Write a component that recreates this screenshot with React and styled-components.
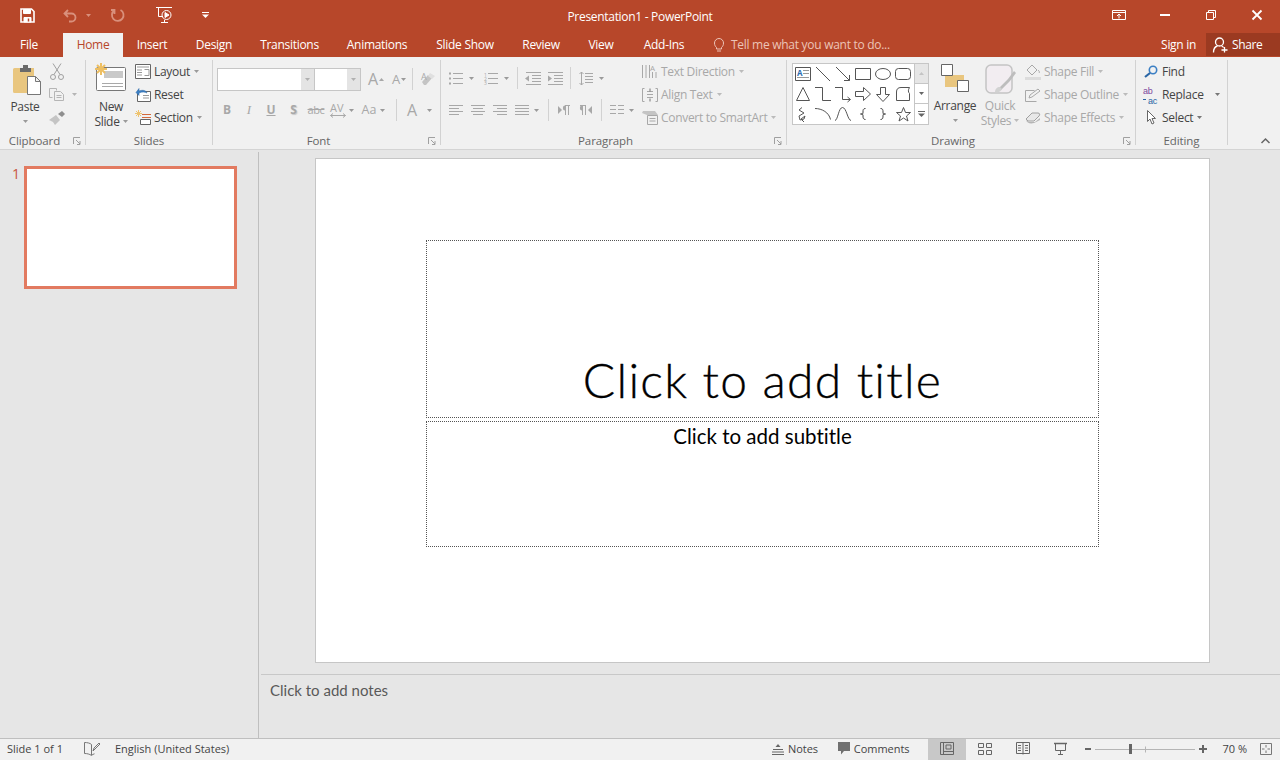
import React from "react";
import styled, { createGlobalStyle } from "styled-components";

const GlobalStyle = createGlobalStyle`
  html, body { margin: 0; padding: 0; height: 100%; overflow: hidden; }
  body { font-family: "Open Sans", "Liberation Sans", sans-serif; font-size: 12px; color: #444; background: #e6e6e6; }
  * { box-sizing: border-box; }
`;

const BRICK = "#b7472a";
const OFF = "#a8a8a8";

const Page = styled.div`
  width: 1280px;
  height: 760px;
  display: flex;
  flex-direction: column;
`;

/* title bar */
const TitleBar = styled.div`
  height: 33px;
  background: ${BRICK};
  display: grid;
  grid-template-columns: 1fr auto 1fr;
  align-items: center;
  color: #fff;
`;
const Qat = styled.div`
  display: flex;
  align-items: center;
  padding-bottom: 3px;
`;
const WinTitle = styled.div`
  font-size: 12px;
  letter-spacing: -0.3px;
`;
const WinButtons = styled.div`
  display: flex;
  justify-content: flex-end;
  padding-bottom: 3px;
`;
const WinBtn = styled.div`
  width: 46px;
  height: 30px;
  display: flex;
  align-items: center;
  justify-content: center;
`;

/* tabs */
const TabBar = styled.div`
  height: 24px;
  background: ${BRICK};
  display: flex;
  align-items: stretch;
  color: #fff;
`;
const Tab = styled.div`
  width: ${(p) => p.$w}px;
  margin-left: ${(p) => p.$ml || 0}px;
  display: flex;
  align-items: center;
  justify-content: center;
  letter-spacing: -0.3px;
  padding-bottom: 1px;
  background: ${(p) => (p.$active ? "#f1f1f1" : "transparent")};
  color: ${(p) => (p.$active ? BRICK : "#fff")};
`;
const TellMe = styled.div`
  display: flex;
  align-items: center;
  color: #ecc4b8;
  letter-spacing: -0.28px;
  padding: 0 0 1px 14px;
  gap: 7px;
  flex: 1;
`;
const SignIn = styled.div`
  display: flex;
  align-items: center;
  letter-spacing: -0.3px;
  padding: 0 10px 1px 0;
`;
const Share = styled.div`
  width: 74px;
  height: 23px;
  background: #9b3a21;
  display: flex;
  align-items: center;
  padding-left: 7px;
  gap: 4px;
  letter-spacing: -0.35px;
`;

/* ribbon */
const Ribbon = styled.div`
  height: 93px;
  background: #f1f1f1;
  border-bottom: 1px solid #d4d4d4;
  display: flex;
  padding-top: 3px;
`;
const Group = styled.div`
  width: ${(p) => p.$w}px;
  height: 85px;
  flex: none;
  border-right: 1px solid #d2d2d2;
  display: flex;
  flex-direction: column;
`;
const GroupBody = styled.div`
  height: 71px;
  display: flex;
`;
const GroupFoot = styled.div`
  height: 14px;
  display: flex;
  color: #666;
  font-size: 11.5px;
  line-height: 20px;
  letter-spacing: -0.1px;
`;
const GroupName = styled.div`
  flex: 1;
  text-align: center;
`;
const Launcher = styled.div`
  width: 16px;
  height: 20px;
  display: flex;
  align-items: center;
  justify-content: center;
`;
const Collapse = styled.div`
  flex: 1;
  height: 85px;
  display: flex;
  align-items: flex-end;
  justify-content: flex-end;
  padding: 0 10px 1px 0;
`;
const BigBtn = styled.div`
  width: ${(p) => p.$w}px;
  margin-left: ${(p) => p.$ml || 0}px;
  flex: none;
  display: flex;
  flex-direction: column;
  align-items: center;
  color: ${(p) => (p.$off ? OFF : "#444")};
  letter-spacing: -0.3px;
`;
const BigIcon = styled.div`
  height: ${(p) => p.$h || 39}px;
  display: flex;
  align-items: flex-end;
  padding-bottom: ${(p) => p.$pb}px;
`;
const BigLine = styled.div`
  height: 15px;
  line-height: 15px;
  display: flex;
  align-items: center;
  white-space: nowrap;
`;
const Stack = styled.div`
  margin-left: ${(p) => p.$ml || 0}px;
  display: flex;
  flex-direction: column;
  flex: none;
`;
const StackRow = styled.div`
  height: 23px;
  display: flex;
  align-items: center;
  color: ${(p) => (p.$off ? OFF : "#444")};
  letter-spacing: -0.3px;
  white-space: nowrap;
`;
const StackText = styled.span`
  margin-left: 3px;
`;
const ToolRows = styled.div`
  width: ${(p) => p.$w}px;
  flex: none;
  padding-top: ${(p) => p.$top}px;
  display: flex;
  flex-direction: column;
  gap: ${(p) => p.$gap}px;
`;
const ToolRow = styled.div`
  height: 30px;
  display: flex;
  align-items: center;
`;
const Sep = styled.i`
  display: block;
  flex: none;
  width: 1px;
  height: 22px;
  margin-left: ${(p) => p.$ml}px;
  background: #d2d2d2;
`;
const Combo = styled.div`
  margin-left: 4px;
  display: flex;
  height: 23px;
  border: 1px solid #c6c6c6;
  background: #c6c6c6;
`;
const ComboField = styled.div`
  width: ${(p) => p.$w}px;
  margin-left: ${(p) => p.$ml || 0}px;
  background: #fff;
`;
const ComboArrow = styled.div`
  width: 13px;
  background: #e4e4e4;
  display: flex;
  align-items: center;
  justify-content: center;
`;
const Glyph = styled.span`
  flex: none;
  width: ${(p) => p.$w}px;
  margin-left: ${(p) => p.$ml || 0}px;
  text-align: center;
  color: ${OFF};
  font-family: ${(p) => (p.$serif ? '"Liberation Serif", serif' : "inherit")};
  font-size: ${(p) => p.$size || 12}px;
  font-weight: ${(p) => (p.$bold ? 700 : 400)};
  font-style: ${(p) => (p.$italic ? "italic" : "normal")};
  text-decoration: ${(p) => p.$deco || "none"};
  text-shadow: ${(p) => (p.$shadow ? "1px 1px 1px #c8c8c8" : "none")};
  letter-spacing: ${(p) => p.$ls || 0}px;
  line-height: 14px;
`;
const Gallery = styled.div`
  margin: 3px 0 0 5px;
  width: 137px;
  height: 62px;
  border: 1px solid #c6c6c6;
  background: #fff;
  display: flex;
  flex: none;
`;
const ShapeGrid = styled.div`
  width: 121px;
  display: grid;
  grid-template-columns: repeat(6, 20px);
  grid-auto-rows: 20px;
  place-items: center;
`;
const GalleryScroll = styled.div`
  flex: 1;
  border-left: 1px solid #c6c6c6;
  display: grid;
  grid-template-rows: repeat(3, 1fr);
`;
const ScrollBtn = styled.div`
  display: flex;
  align-items: center;
  justify-content: center;
  background: ${(p) => (p.$off ? "#e6e6e6" : "#fff")};
  border-bottom: ${(p) => (p.$last ? "none" : "1px solid #c6c6c6")};
`;

/* workspace */
const Workspace = styled.div`
  height: 588px;
  display: flex;
  background: #e6e6e6;
`;
const Thumbs = styled.div`
  width: 259px;
  margin-top: 2px;
  border-right: 1px solid #bfbfbf;
  padding: 14px 0 0 12px;
  display: flex;
  align-items: flex-start;
`;
const ThumbNo = styled.div`
  width: 12px;
  color: #c8553d;
  font-size: 14px;
  line-height: 16px;
`;
const ThumbFrame = styled.div`
  width: 213px;
  height: 123px;
  background: #fff;
  border: 3px solid #e27a60;
`;
const Editor = styled.div`
  flex: 1;
  display: flex;
  flex-direction: column;
`;
const SlideArea = styled.div`
  height: 524px;
  padding: 8px 0 0 56px;
`;
const Slide = styled.div`
  width: 895px;
  height: 505px;
  background: #fff;
  border: 1px solid #c6c6c6;
  padding: 81px 0 0 110px;
  display: flex;
  flex-direction: column;
  gap: 3px;
`;
const TitleBox = styled.div`
  width: 673px;
  height: 178px;
  border: 1px dotted #555;
  display: flex;
  align-items: flex-end;
  justify-content: center;
  font-family: "Lato", sans-serif;
  font-weight: 300;
  font-size: 48px;
  letter-spacing: 1.25px;
  font-variant-ligatures: none;
  -webkit-text-stroke: 0.35px #000;
  line-height: 74px;
  color: #000;
`;
const SubBox = styled.div`
  width: 673px;
  height: 126px;
  border: 1px dotted #555;
  text-align: center;
  font-family: "Lato", sans-serif;
  font-size: 20.5px;
  font-variant-ligatures: none;
  line-height: 28px;
  color: #000;
`;
const Notes = styled.div`
  flex: 1;
  margin-left: 2px;
  border-top: 1px solid #c8c8c8;
  padding: 5px 0 0 9px;
  font-family: "Lato", sans-serif;
  font-size: 15px;
  line-height: 20px;
  color: #595959;
`;

/* status bar */
const StatusBar = styled.div`
  height: 22px;
  background: #f1f1f1;
  border-top: 1px solid #bfbfbf;
  display: flex;
  align-items: center;
  padding-bottom: 2px;
  font-size: 11px;
  color: #444;
`;
const StatusText = styled.span`
  margin-left: ${(p) => p.$ml}px;
  white-space: nowrap;
  letter-spacing: ${(p) => p.$ls || 0}px;
`;
const StatusGap = styled.div`
  flex: 1;
`;
const ViewBtn = styled.div`
  width: 38px;
  height: 21px;
  flex: none;
  margin: 2px 0 0 ${(p) => p.$ml}px;
  background: #c8c8c8;
  display: flex;
  align-items: center;
  justify-content: center;
  padding-bottom: 2px;
`;
const EndPad = styled.div`
  width: 8px;
  flex: none;
`;

const Svg = styled.svg`
  display: block;
  flex: none;
  overflow: visible;
  margin-left: ${(p) => p.$ml || 0}px;
  fill: none;
  stroke: ${(p) => p.$c};
`;
const Ico = ({ w, h, ml, c = OFF, children }) => (
  <Svg width={w} height={h} viewBox={`0 0 ${w} ${h}`} $ml={ml} $c={c}>
    {children}
  </Svg>
);
const Caret = ({ ml, c = "#9a9a9a" }) => (
  <Ico w={5} h={3} ml={ml} c="none">
    <path d="M0 0h5L2.5 3z" fill={c} />
  </Ico>
);
const LauncherIcon = () => (
  <Ico w={8} h={8} c="#a0a0a0">
    <path d="M.5 7V.5H7M3 3l4 4M7 4v3.5H4" />
  </Ico>
);
const lines = (rows) => rows.map(([x, y, l], i) => <path key={i} d={`M${x} ${y + 0.5}h${l}`} />);

const WHITE = "#fff";
const PALE = "#d9907c";

export default function App() {
  return (
    <Page>
      <GlobalStyle />
      <TitleBar>
        <Qat>
          <Ico w={15} h={15} ml={20} c={WHITE}>
            <path d="M1 1h10.5L14 3.5V14H1z" strokeWidth="1.6" />
            <path d="M3.5 1.5h7v4h-7z" fill={WHITE} />
            <path d="M4 9.5h7V14H4z" fill={WHITE} />
            <path d="M8.5 10.5v3" stroke={BRICK} strokeWidth="1.5" />
          </Ico>
          <Ico w={14} h={13} ml={28} c={PALE}>
            <path d="M5 1L1.5 4.5 5 8M2 4.5h6.5a4 4 0 0 1 0 8H6" strokeWidth="1.8" />
          </Ico>
          <Caret ml={9} c={PALE} />
          <Ico w={14} h={14} ml={20} c={PALE}>
            <path d="M9.5 2a5.8 5.8 0 1 1-6 .3M3.500 6V2H0" strokeWidth="1.8" />
          </Ico>
          <Ico w={17} h={16} ml={31} c={WHITE}>
            <path d="M0 .5h16M2.5 1v8.5H7M5 15.5h7M8.5 13v2" />
            <circle cx="10.5" cy="8" r="4.5" />
            <path d="M9 5.5l4 2.5-4 2.5z" fill={WHITE} />
          </Ico>
          <Ico w={7} h={6} ml={29} c={WHITE}>
            <path d="M0 .5h7" />
            <path d="M0 2.5h7L3.5 6z" fill={WHITE} stroke="none" />
          </Ico>
        </Qat>
        <WinTitle>Presentation1 - PowerPoint</WinTitle>
        <WinButtons>
          <WinBtn>
            <Ico w={14} h={10} c={WHITE}>
              <path d="M.5.5h13v9H.5zM.5 2.5h13M7 8.5V4.5M5 6l2-2 2 2" />
            </Ico>
          </WinBtn>
          <WinBtn>
            <Ico w={10} h={2} c={WHITE}>
              <path d="M0 1h10" strokeWidth="2" />
            </Ico>
          </WinBtn>
          <WinBtn>
            <Ico w={10} h={10} c={WHITE}>
              <path d="M.5 2.5h7v7h-7zM2.5 2.5v-2h7v7h-2" />
            </Ico>
          </WinBtn>
          <WinBtn>
            <Ico w={10} h={10} c={WHITE}>
              <path d="M.5.5l9 9M9.5.5l-9 9" strokeWidth="1.8" />
            </Ico>
          </WinBtn>
        </WinButtons>
      </TitleBar>

      <TabBar>
        <Tab $w={58}>File</Tab>
        <Tab $w={60} $ml={5} $active>Home</Tab>
        <Tab $w={58}>Insert</Tab>
        <Tab $w={66}>Design</Tab>
        <Tab $w={85}>Transitions</Tab>
        <Tab $w={90}>Animations</Tab>
        <Tab $w={86}>Slide Show</Tab>
        <Tab $w={66}>Review</Tab>
        <Tab $w={54}>View</Tab>
        <Tab $w={72}>Add-Ins</Tab>
        <TellMe>
          <Ico w={10} h={14} c="#ecc4b8">
            <path d="M2.5 9.5C1.5 8.5.5 7.5.5 5a4.5 4.5 0 0 1 9 0c0 2.5-1 3.5-2 4.5v1.500h-5zM3 13h4" />
          </Ico>
          Tell me what you want to do...
        </TellMe>
        <SignIn>Sign in</SignIn>
        <Share>
          <Ico w={15} h={16} c={WHITE}>
            <circle cx="6.500" cy="5" r="4" strokeWidth="1.300" />
            <path d="M.5 15.500c0-4 2-6 4-6.500M8.500 9c1 .3 1.500.6 2 1.500M11.500 10v5.500M8.500 13h6" strokeWidth="1.300" />
          </Ico>
          Share
        </Share>
      </TabBar>

      <Ribbon>
        <Group $w={86}>
          <GroupBody>
            <BigBtn $w={42} $ml={4}>
              <BigIcon $pb={4}>
                <Ico w={28} h={30} ml={4} c="#777">
                  <path d="M0 4.500a1.500 1.500 0 0 1 1.500-1.500h19.500v25H1.500A1.500 1.500 0 0 1 0 26.500z" fill="#e9c67f" stroke="none" />
                  <path d="M7 3h3V0h5v3h3v4H7z" fill="#6a6a6a" stroke="none" />
                  <path d="M14.500 11.500h8l5 5v13h-13zM22.500 11.500v5h5" fill="#fff" />
                </Ico>
              </BigIcon>
              <BigLine>Paste</BigLine>
              <BigLine><Caret /></BigLine>
            </BigBtn>
            <Stack $ml={3}>
              <StackRow>
                <Ico w={16} h={17} c="#a0a0a0">
                  <path d="M4 .5l7 11M12 .5l-7 11" />
                  <circle cx="4" cy="14" r="2.500" />
                  <circle cx="12" cy="14" r="2.500" />
                </Ico>
              </StackRow>
              <StackRow>
                <Ico w={16} h={13} c="#b5b5b5">
                  <path d="M.5.5h7l0 2M.5.5v9h3M5.500 3.500h6l3 3v6h-9zM7.500 7.500h5M7.500 9.500h5" />
                </Ico>
                <Caret ml={7} c="#b5b5b5" />
              </StackRow>
              <StackRow>
                <Ico w={16} h={14} c="none">
                  <path d="M0 9l7-5 4 5-5 5-2-3z" fill="#c4c4c4" />
                  <path d="M9 3l4-3 3 3-3 3z" fill="#8e8e8e" />
                </Ico>
              </StackRow>
            </Stack>
          </GroupBody>
          <GroupFoot>
            <GroupName>Clipboard</GroupName>
            <Launcher><LauncherIcon /></Launcher>
          </GroupFoot>
        </Group>

        <Group $w={127}>
          <GroupBody>
            <BigBtn $w={36} $ml={7}>
              <BigIcon $pb={8}>
                <Ico w={32} h={28} c="#777">
                  <path d="M2.500 4.500h27a1 1 0 0 1 1 1v21a1 1 0 0 1-1 1h-27a1 1 0 0 1-1-1v-21a1 1 0 0 1 1-1z" fill="#fff" />
                  <path d="M9 8h19v7H9z" fill="#c9c9c9" stroke="none" />
                  <path d="M7 20.500h21M7 23.500h21" stroke="#a9a9a9" />
                  <path d="M6 0v12M0 6h12M2 2l8 8M10 2l-8 8" stroke="#eebf62" strokeWidth="2" />
                </Ico>
              </BigIcon>
              <BigLine>New</BigLine>
              <BigLine>Slide<Caret ml={3} /></BigLine>
            </BigBtn>
            <Stack $ml={6}>
              <StackRow>
                <Ico w={16} h={15} c="#666">
                  <path d="M.5.5h15v14H.5z" fill="#fff" />
                  <path d="M2 3h12M2 6h5M2 8.500h5M2 11h5M9.500 5.500h4.500v6H9.500" stroke="#999" />
                </Ico>
                <StackText>Layout</StackText>
                <Caret ml={4} />
              </StackRow>
              <StackRow>
                <Ico w={16} h={15} c="#666">
                  <path d="M2.500 4.500h13v10h-13z" fill="#fff" />
                  <path d="M8 8.500h6M8 11h6" stroke="#999" />
                  <path d="M1 5.500l3-4v2.500c4-1.500 7-.5 8 2-2-1-5-1.500-8 0v2.500z" fill="#3b7fc4" stroke="#2a66a5" strokeWidth=".5" />
                </Ico>
                <StackText>Reset</StackText>
              </StackRow>
              <StackRow>
                <Ico w={16} h={15} c="#666">
                  <path d="M3.500 0v7M0 3.500h7M1 1l5 5M6 1L1 6" stroke="#eec36f" />
                  <path d="M7 4.500h9M7 7.500h9" stroke="#d56a3c" />
                  <path d="M5.500 9.500h10v5h-10z" fill="#fff" />
                </Ico>
                <StackText>Section</StackText>
                <Caret ml={4} />
              </StackRow>
            </Stack>
          </GroupBody>
          <GroupFoot><GroupName>Slides</GroupName></GroupFoot>
        </Group>

        <Group $w={228}>
          <GroupBody>
            <ToolRows $w={227} $top={4} $gap={1}>
              <ToolRow>
                <Combo>
                  <ComboField $w={83} />
                  <ComboArrow><Caret c="#b0b0b0" /></ComboArrow>
                  <ComboField $w={32} $ml={1} />
                  <ComboArrow><Caret c="#b0b0b0" /></ComboArrow>
                </Combo>
                <Glyph $w={12} $ml={6} $size={16}>A</Glyph>
                <Ico w={5} h={3} c="none"><path d="M0 3h5L2.500 0z" fill={OFF} /></Ico>
                <Glyph $w={10} $ml={7} $size={13}>A</Glyph>
                <Caret ml={0} />
                <Sep $ml={6} />
                <Ico w={16} h={14} ml={8} c="none">
                  <path d="M1 10l6-7 4 3-6 7H3z" fill="#c4c4c4" />
                  <path d="M9 1l5 3-3 3-4-3z" fill="#e0e0e0" />
                  <text x="0" y="8" fontSize="9" fill={OFF}>A</text>
                </Ico>
              </ToolRow>
              <ToolRow>
                <Glyph $w={22} $ml={3} $bold>B</Glyph>
                <Glyph $w={22} $italic $serif $size={13}>I</Glyph>
                <Glyph $w={22} $deco="underline" $bold>U</Glyph>
                <Glyph $w={23} $bold $shadow>S</Glyph>
                <Glyph $w={22} $deco="line-through" $size={11} $ls={-0.4}>abc</Glyph>
                <Ico w={16} h={15} ml={3}>
                  <text x="0" y="9" fontSize="11" fill={OFF} stroke="none">AV</text>
                  <path d="M.5 12.500h15M3 10.500l-2.500 2 2.500 2M13 10.500l2.500 2-2.500 2" />
                </Ico>
                <Caret ml={3} />
                <Glyph $w={22} $ml={4} $size={12.5}>Aa</Glyph>
                <Caret ml={0} />
                <Sep $ml={11} />
                <Glyph $w={14} $ml={8} $size={16}>A</Glyph>
                <Caret ml={8} />
              </ToolRow>
            </ToolRows>
          </GroupBody>
          <GroupFoot>
            <GroupName>Font</GroupName>
            <Launcher><LauncherIcon /></Launcher>
          </GroupFoot>
        </Group>

        <Group $w={346}>
          <GroupBody>
            <ToolRows $w={201} $top={3} $gap={2}>
              <ToolRow>
                <Ico w={14} h={13} ml={8}>
                  <path d="M0 1.500h2M0 6.500h2M0 11.500h2" strokeWidth="2" />
                  {lines([[4, 1, 10], [4, 6, 10], [4, 11, 10]])}
                </Ico>
                <Caret ml={6} />
                <Ico w={14} h={13} ml={10}>
                  <text x="0" y="9" fontSize="5" fill={OFF} stroke="none">
                    <tspan x="0" y="5">1</tspan>
                    <tspan x="0" y="9">2</tspan>
                    <tspan x="0" y="13">3</tspan>
                  </text>
                  {lines([[4, 1, 10], [4, 6, 10], [4, 11, 10]])}
                </Ico>
                <Caret ml={6} />
                <Sep $ml={8} />
                <Ico w={16} h={13} ml={7}>
                  {lines([[1, 0, 15], [7, 3, 9], [7, 6, 9], [7, 9, 9], [1, 12, 15]])}
                  <path d="M0 6.500l4-3v6z" fill={OFF} stroke="none" />
                </Ico>
                <Ico w={16} h={13} ml={6}>
                  {lines([[1, 0, 15], [7, 3, 9], [7, 6, 9], [7, 9, 9], [1, 12, 15]])}
                  <path d="M5 6.500l-4-3v6z" fill={OFF} stroke="none" />
                </Ico>
                <Sep $ml={7} />
                <Ico w={14} h={15} ml={8}>
                  <path d="M2.500 1v13M.5 3l2-2 2 2M.5 12l2 2 2-2" />
                  {lines([[6, 2, 8], [6, 5, 8], [6, 8, 8], [6, 11, 8]])}
                </Ico>
                <Caret ml={6} />
              </ToolRow>
              <ToolRow>
                <Ico w={14} h={11} ml={8}>{lines([[0, 0, 14], [0, 3, 10], [0, 6, 14], [0, 9, 10]])}</Ico>
                <Ico w={14} h={11} ml={8}>{lines([[0, 0, 14], [2, 3, 10], [0, 6, 14], [2, 9, 10]])}</Ico>
                <Ico w={14} h={11} ml={8}>{lines([[0, 0, 14], [4, 3, 10], [0, 6, 14], [4, 9, 10]])}</Ico>
                <Ico w={14} h={11} ml={8}>{lines([[0, 0, 14], [0, 3, 14], [0, 6, 14], [0, 9, 14]])}</Ico>
                <Caret ml={5} />
                <Sep $ml={9} />
                <Ico w={12} h={10} ml={9}>
                  <path d="M0 1l4 4-4 4z" fill={OFF} stroke="none" />
                  <path d="M7.500 0v10M10.500 0v10M7.500.5H12" />
                  <path d="M5 3a2 2 0 0 1 2-2.500v5A2 2 0 0 1 5 3z" fill={OFF} stroke="none" />
                </Ico>
                <Ico w={12} h={10} ml={10}>
                  <path d="M12 1L8 5l4 4z" fill={OFF} stroke="none" />
                  <path d="M2.500 0v10M5.500 0v10M0 .5h6" />
                  <path d="M0 3a2 2 0 0 1 2-2.500v5A2 2 0 0 1 0 3z" fill={OFF} stroke="none" />
                </Ico>
                <Sep $ml={9} />
                <Ico w={14} h={10} ml={8}>{lines([[0, 0, 6], [0, 4, 6], [0, 8, 6], [8, 0, 6], [8, 4, 6], [8, 8, 6]])}</Ico>
                <Caret ml={5} />
              </ToolRow>
            </ToolRows>
            <Stack>
              <StackRow $off>
                <Ico w={16} h={16}>
                  <path d="M.5 1v13M4 1v13M7.500 1v13M10.500 8v6M14 8v6" />
                  <text x="8" y="7" fontSize="8" fill={OFF} stroke="none">A</text>
                </Ico>
                <StackText>Text Direction</StackText>
                <Caret ml={4} c="#bbb" />
              </StackRow>
              <StackRow $off>
                <Ico w={16} h={14}>
                  <path d="M2.500.5h-2v13h2M13.500.5h2v13h-2" />
                  <path d="M5 3.500h6M5 6.500h6M5 9.500h6" />
                  <path d="M8 .5v3M8 10.500v3" stroke="#777" />
                </Ico>
                <StackText>Align Text</StackText>
                <Caret ml={4} c="#bbb" />
              </StackRow>
              <StackRow $off>
                <Ico w={16} h={15}>
                  <path d="M0 3l1-2h12l3 4H5z" fill="#c4c4c4" stroke="none" />
                  <path d="M5.500 5.500h10v9h-10zM7.500 8.500h6M7.500 11h6" fill="#f1f1f1" />
                </Ico>
                <StackText>Convert to SmartArt</StackText>
                <Caret ml={4} c="#bbb" />
              </StackRow>
            </Stack>
          </GroupBody>
          <GroupFoot>
            <GroupName>Paragraph</GroupName>
            <Launcher><LauncherIcon /></Launcher>
          </GroupFoot>
        </Group>

        <Group $w={349}>
          <GroupBody>
            <Gallery>
              <ShapeGrid>
                <Ico w={16} h={14} c="#555">
                  <path d="M.5.5h15v13H.5z" />
                  <text x="2" y="9" fontSize="8" fontWeight="700" fill="#2b6cb0" stroke="none">A</text>
                  <path d="M8 3.500h6M8 6.500h6M2 10.500h12" stroke="#999" />
                </Ico>
                <Ico w={14} h={14} c="#555"><path d="M0 0l14 14" /></Ico>
                <Ico w={14} h={14} c="#555"><path d="M0 0l13.500 13.500M13.500 8v5.500H8" /></Ico>
                <Ico w={16} h={12} c="#555"><path d="M.5.500h15v11H.5z" /></Ico>
                <Ico w={16} h={12} c="#555"><ellipse cx="8" cy="6" rx="7.500" ry="5.500" /></Ico>
                <Ico w={16} h={12} c="#555"><rect x=".5" y=".5" width="15" height="11" rx="3" /></Ico>

                <Ico w={14} h={14} c="#555"><path d="M7 .5l6.500 13H.5z" /></Ico>
                <Ico w={16} h={14} c="#555"><path d="M0 .5h7.500v13H16" /></Ico>
                <Ico w={16} h={14} c="#555"><path d="M0 .5h7.500v12H15M12.500 10l3 2.500-3 2.500" /></Ico>
                <Ico w={16} h={14} c="#555"><path d="M.5 4.500h8v-4l7 6.500-7 6.500v-4h-8z" /></Ico>
                <Ico w={14} h={15} c="#555"><path d="M4.500.5h5v7h4L7 14.500.5 7.500h4z" /></Ico>
                <Ico w={14} h={14} c="#555"><path d="M.5 13.500V5C.5 2 2 .5 5 .5h8.500C12 3 12 5 13.500 6.500V13.500z" /></Ico>

                <Ico w={10} h={15} c="#555"><path d="M4 .5L1 3l5 3-5 3 1 4 4-1 1-3-4 3 3 3" /></Ico>
                <Ico w={16} h={12} c="#555"><path d="M0 .5c7 0 14 4 15.500 11" /></Ico>
                <Ico w={16} h={14} c="#555"><path d="M0 13.500C3 13 3.500 .5 7.500.5s5 12.500 8.500 13" /></Ico>
                <Ico w={6} h={12} c="#444"><path d="M5.500.5C3 .5 3 2 3 4s0 2-2.500 2C3 6 3 6.500 3 8s0 3.500 2.500 3.500" /></Ico>
                <Ico w={6} h={12} c="#444"><path d="M.5.5C3 .5 3 2 3 4s0 2 2.500 2C3 6 3 6.500 3 8s0 3.500-2.500 3.500" /></Ico>
                <Ico w={15} h={14} c="#555"><path d="M7.500.5l2 5h5l-4 3.500 1.500 5-4.500-3-4.500 3 1.500-5-4-3.500h5z" /></Ico>
              </ShapeGrid>
              <GalleryScroll>
                <ScrollBtn $off><Ico w={5} h={3} c="none"><path d="M0 3h5L2.500 0z" fill="#c4c4c4" /></Ico></ScrollBtn>
                <ScrollBtn><Caret c="#666" /></ScrollBtn>
                <ScrollBtn $last>
                  <Ico w={7} h={6} c="#666">
                    <path d="M0 .5h7" />
                    <path d="M0 2.500h7L3.500 6z" fill="#666" stroke="none" />
                  </Ico>
                </ScrollBtn>
              </GalleryScroll>
            </Gallery>
            <BigBtn $w={36} $ml={8}>
              <BigIcon $h={38} $pb={6}>
                <Ico w={28} h={28} c="#666">
                  <path d="M4 11h19v12H4z" fill="#e9c67f" stroke="none" />
                  <path d="M.5.500h11v11H.5zM16.500 16.500h11v11h-11z" fill="#fff" />
                </Ico>
              </BigIcon>
              <BigLine>Arrange</BigLine>
              <BigLine><Caret /></BigLine>
            </BigBtn>
            <BigBtn $w={44} $ml={5} $off>
              <BigIcon $h={38} $pb={3}>
                <Ico w={31} h={31} c="#c4c4c4">
                  <rect x="1" y="1" width="26" height="28" rx="5" fill="#f2edf1" strokeWidth="1.500" />
                  <path d="M14 24l9-9 6-8 2 2-6 8-9 9z" fill="#bdbdbd" stroke="none" />
                  <path d="M10 28c0-3 2-5 5-5l2 2c-1 2-3 4-7 3z" fill="#d2d2d2" stroke="none" />
                </Ico>
              </BigIcon>
              <BigLine>Quick</BigLine>
              <BigLine>Styles<Caret ml={3} c="#bbb" /></BigLine>
            </BigBtn>
            <Stack $ml={3}>
              <StackRow $off>
                <Ico w={16} h={16}>
                  <path d="M2 6l5-5 5 5-5 5z" />
                  <path d="M13 6c1 1 2 2 1 3" />
                  <path d="M0 13h16v3H0z" fill="#dcdcdc" stroke="none" />
                </Ico>
                <StackText>Shape Fill</StackText>
                <Caret ml={4} c="#bbb" />
              </StackRow>
              <StackRow $off>
                <Ico w={16} h={14}>
                  <path d="M11.500 13.500H.5v-11h9" />
                  <path d="M4 10l1-3 8-6 2 2-8 6z" />
                </Ico>
                <StackText>Shape Outline</StackText>
                <Caret ml={4} c="#bbb" />
              </StackRow>
              <StackRow $off>
                <Ico w={16} h={13} c="none">
                  <path d="M1 8l6-6h6c2 0 2 2 1 3l-5 5H3z" fill="#e8e8e8" stroke="#a0a0a0" />
                  <path d="M1 9c1 3 4 4 8 3l6-3v-2l-5 4H4z" fill="#b5b5b5" />
                </Ico>
                <StackText>Shape Effects</StackText>
                <Caret ml={4} c="#bbb" />
              </StackRow>
            </Stack>
          </GroupBody>
          <GroupFoot>
            <GroupName>Drawing</GroupName>
            <Launcher><LauncherIcon /></Launcher>
          </GroupFoot>
        </Group>

        <Group $w={92}>
          <GroupBody>
            <Stack $ml={7}>
              <StackRow>
                <Ico w={16} h={13} c="#3b7fc4">
                  <circle cx="10" cy="5" r="3.700" strokeWidth="1.600" />
                  <path d="M7 8l-5 4" stroke="#2a66a5" strokeWidth="2.200" />
                </Ico>
                <StackText>Find</StackText>
              </StackRow>
              <StackRow>
                <Ico w={16} h={16} c="none">
                  <text fontFamily="Liberation Sans" fontSize="9" stroke="none">
                    <tspan x="0" y="6.500" fill="#7d4a9e">ab</tspan>
                    <tspan x="5" y="16.500" fill="#2a66a5">ac</tspan>
                  </text>
                  <path d="M0 12.500h3" stroke="#2a66a5" />
                </Ico>
                <StackText>Replace</StackText>
                <Caret ml={11} c="#777" />
              </StackRow>
              <StackRow>
                <Ico w={16} h={15} c="#666">
                  <path d="M4.500.5v11l2.500-2.500 2 5 2-1-2-4.500h3.500z" fill="#fff" />
                </Ico>
                <StackText>Select</StackText>
                <Caret ml={4} c="#777" />
              </StackRow>
            </Stack>
          </GroupBody>
          <GroupFoot><GroupName>Editing</GroupName></GroupFoot>
        </Group>

        <Collapse>
          <Ico w={9} h={6} c="#666">
            <path d="M.5 5l4-4 4 4" strokeWidth="1.500" />
          </Ico>
        </Collapse>
      </Ribbon>

      <Workspace>
        <Thumbs>
          <ThumbNo>1</ThumbNo>
          <ThumbFrame />
        </Thumbs>
        <Editor>
          <SlideArea>
            <Slide>
              <TitleBox>Click to add title</TitleBox>
              <SubBox>Click to add subtitle</SubBox>
            </Slide>
          </SlideArea>
          <Notes>Click to add notes</Notes>
        </Editor>
      </Workspace>

      <StatusBar>
        <StatusText $ml={7}>Slide 1 of 1</StatusText>
        <Ico w={16} h={14} ml={21} c="#777">
          <path d="M7.500 2.500C6 1 3 .5.500.5v11c2.500 0 5 .5 7 2 1-1 2-1.500 3-1.700M7.500 2.500V13" />
          <path d="M9 9l1-3 5-5 1 1-5 5z" />
        </Ico>
        <StatusText $ml={15}>English (United States)</StatusText>
        <StatusGap />
        <Ico w={12} h={12} c="#666">
          <path d="M1 6.500h10M0 9h12M0 11.500h12" />
          <path d="M3.500 4L6 1l2.500 3z" fill="#666" stroke="none" />
        </Ico>
        <StatusText $ml={4} $ls={-0.1}>Notes</StatusText>
        <Ico w={13} h={13} ml={20} c="none">
          <path d="M0 0h12v9H6l-3 3.500V9H0z" fill="#707070" />
        </Ico>
        <StatusText $ml={3} $ls={-0.05}>Comments</StatusText>
        <ViewBtn $ml={19}>
          <Ico w={14} h={13} c="#666">
            <path d="M.5.5h13v12H.5zM3.500.5v12M3.500 9.500h10M6 3h5v4H6z" />
          </Ico>
        </ViewBtn>
        <Ico w={14} h={12} ml={12} c="#666">
          <path d="M.5.5h5v4h-5zM8.500.5h5v4h-5zM.5 7.500h5v4h-5zM8.500 7.500h5v4h-5z" />
        </Ico>
        <Ico w={14} h={13} ml={24} c="#666">
          <path d="M.5.500h13v11h-13zM7 .5v12M2 3.500h3M2 6h3M2 8.500h3M9 3.500h3M9 6h3M9 8.500h3" />
        </Ico>
        <Ico w={13} h={12} ml={24} c="#666">
          <path d="M0 .5h13" strokeWidth="1.500" />
          <path d="M1.500 1v6.500h10V1M6.500 7.500v4M4 11.500h5" />
        </Ico>
        <Ico w={6} h={2} ml={18} c="#666"><path d="M0 1h6" strokeWidth="2" /></Ico>
        <Ico w={100} h={12} ml={4} c="#b5b5b5">
          <path d="M0 6.500h100M50.500 3.500v6" />
          <path d="M34 1h3v10h-3z" fill="#666" stroke="none" />
        </Ico>
        <Ico w={8} h={8} ml={4} c="#666"><path d="M0 4h8M4 0v8" strokeWidth="2" /></Ico>
        <StatusText $ml={15}>70 %</StatusText>
        <Ico w={12} h={12} ml={13} c="#777">
          <path d="M.5.5h11v11H.5zM6 2v2.500M6 7.500V10M2 6h2.500M7.500 6H10" />
        </Ico>
        <EndPad />
      </StatusBar>
    </Page>
  );
}
